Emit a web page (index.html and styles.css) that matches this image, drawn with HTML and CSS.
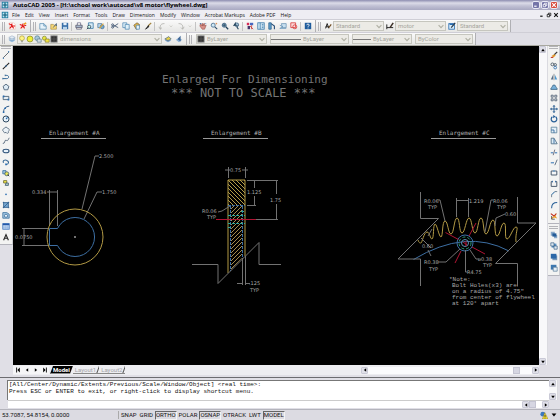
FILE: index.html
```html
<!DOCTYPE html>
<html lang="en">
<head>
    <meta charset="UTF-8">
    <meta name="viewport" content="width=device-width, initial-scale=1.0">
    <title>AutoCAD 2005 - [H:\school work\autocad\v8 motor\flywheel.dwg]</title>
    <link rel="stylesheet" href="styles.css">
</head>
<body>
    <!-- icon set, 10x10 each -->
    <svg class="defs" aria-hidden="true">
        <symbol id="app" viewBox="0 0 10 10"><rect x="1" y="1" width="8" height="8" fill="#12769a"/><path d="M2 2h6v6H2z" fill="#bfe6f2"/><path d="M5 2v6M2 5h6" stroke="#0a5878" stroke-width="1.4"/></symbol>
        <symbol id="pdf" viewBox="0 0 10 10"><path d="M2 1h5l2 2v6H2z" fill="#fff" stroke="#e8a8a0" stroke-width=".6"/><path d="M1 2l5 3 3 0M5 2c0 3-1 5-3 6M5 5l2 3" stroke="#e01818" stroke-width="1.3" fill="none"/></symbol>
        <symbol id="pdf2" viewBox="0 0 10 10"><path d="M1 3h6v6H2z" fill="#fbe8dc"/><path d="M1 3l5 2 3-1M5 2c0 3-1 5-3 6M5 5l2 3" stroke="#e01818" stroke-width="1.3" fill="none"/><path d="M6 3l3-2" stroke="#f0981c" stroke-width="2"/></symbol>
        <symbol id="new" viewBox="0 0 10 10"><path d="M1 2h5l3 3v4H1z" fill="#e6f3fa" stroke="#4480a8" stroke-width=".8"/><path d="M6 2v3h3" fill="none" stroke="#4480a8" stroke-width=".8"/></symbol>
        <symbol id="open" viewBox="0 0 10 10"><path d="M1 3h3l1 1h3v5H1z" fill="#f7d878" stroke="#98802c" stroke-width=".7"/><path d="M4 7l4-5M8 2v3" stroke="#3c5878" fill="none"/></symbol>
        <symbol id="save" viewBox="0 0 10 10"><rect x="1" y="1" width="8" height="8" fill="#376fa8"/><rect x="3" y="1" width="4" height="3" fill="#e4f0fa"/><rect x="2.500" y="6" width="5" height="3" fill="#b8d4ea"/></symbol>
        <symbol id="print" viewBox="0 0 10 10"><path d="M3 4V1h4v3" fill="#fff" stroke="#557" stroke-width=".8"/><path d="M1 4h8v3H1z" fill="#a8b8cc" stroke="#445" stroke-width=".8"/><path d="M2 7h6v2H2z" fill="#f0f0e0" stroke="#557" stroke-width=".8"/></symbol>
        <symbol id="preview" viewBox="0 0 10 10"><path d="M3 1h6v7H3z" fill="#d8ecf8" stroke="#3878a8"/><circle cx="4" cy="6" r="2" fill="#cfe" stroke="#345"/><path d="M2.500 7.500L1 9" stroke="#345" stroke-width="1.200"/></symbol>
        <symbol id="publish" viewBox="0 0 10 10"><path d="M1 2h5v5H1z" fill="#b8d8ee" stroke="#3a6890" stroke-width=".8"/><circle cx="6.500" cy="6" r="2.500" fill="#70a8d0" stroke="#305880" stroke-width=".7"/><path d="M3 8l5-6" stroke="#dba63c" stroke-width="1.400"/></symbol>
        <symbol id="cut" viewBox="0 0 10 10"><path d="M3 4l6 3M3 6l6-4" stroke="#334a68"/><circle cx="2" cy="3.500" r="1.200" fill="none" stroke="#334a68"/><circle cx="2" cy="6.500" r="1.200" fill="none" stroke="#334a68"/></symbol>
        <symbol id="copy" viewBox="0 0 10 10"><path d="M1 1h5v6H1z" fill="#dff0f8" stroke="#3878a8" stroke-width=".8"/><path d="M4 3h5v6H4z" fill="#dff0f8" stroke="#3878a8" stroke-width=".8"/></symbol>
        <symbol id="paste" viewBox="0 0 10 10"><path d="M1 4l4-3 3 2-1 5-3 1z" fill="#e8b848" stroke="#66542c" stroke-width=".8"/><path d="M4 4h4v5H4z" fill="#e8f4fa" stroke="#3878a8" stroke-width=".8"/></symbol>
        <symbol id="brush" viewBox="0 0 10 10"><path d="M9 1L5 5" stroke="#a08038" stroke-width="1.400"/><path d="M5.500 4.500L2 9l4-3z" fill="#222" stroke="#222"/></symbol>
        <symbol id="undo" viewBox="0 0 10 10"><path d="M3 9C2 4 4 2 8 2" fill="none" stroke="#b4b4b0" stroke-width="1.200"/><path d="M1 6l2 3 2-2" fill="none" stroke="#b4b4b0"/></symbol>
        <symbol id="redo" viewBox="0 0 10 10"><path d="M7 9C8 4 6 2 2 2" fill="none" stroke="#b4b4b0" stroke-width="1.200"/><path d="M9 6L7 9 5 7" fill="none" stroke="#b4b4b0"/></symbol>
        <symbol id="pan" viewBox="0 0 10 10"><path d="M2 2l2 3V2h1v3l1-3h1v3l2-1-2 5H4L1 5z" fill="#d89088" stroke="#8c3c34" stroke-width=".6"/><path d="M1 2h2M8 2h1" stroke="#2868a8"/></symbol>
        <symbol id="zoomrt" viewBox="0 0 10 10"><circle cx="4" cy="4" r="2.500" fill="#d0e8f4" stroke="#40688c"/><path d="M6 6l3 3" stroke="#30506c" stroke-width="1.400"/><path d="M7 2h2M8 1v2" stroke="#d07028" stroke-width=".7"/></symbol>
        <symbol id="zoomwin" viewBox="0 0 10 10"><circle cx="4" cy="4" r="2.500" fill="#90b8d0" stroke="#345878"/><path d="M6 6l3 3" stroke="#24445c" stroke-width="1.600"/><path d="M2 4h4M4 2v4" stroke="#24445c"/></symbol>
        <symbol id="zoomprev" viewBox="0 0 10 10"><circle cx="6" cy="3.500" r="2.300" fill="#b8d4e4" stroke="#345878"/><path d="M2 5l2-3v2h3M6 6l2 3" fill="none" stroke="#24445c" stroke-width="1.400"/></symbol>
        <symbol id="props" viewBox="0 0 10 10"><path d="M1 1h3v3H1z" fill="#d82c58"/><path d="M5 1h4v3H5z" fill="#4868c0"/><path d="M2 5h3v4H2z" fill="#48386c"/><path d="M5 5l4 4M7 4v5" stroke="#c83c38"/></symbol>
        <symbol id="center" viewBox="0 0 10 10"><rect x="1" y="1" width="8" height="8" fill="#d8ecf8" stroke="#3878a8"/><path d="M4 1v8M6 3h2M6 5h2M6 7h2" stroke="#3878a8"/></symbol>
        <symbol id="palettes" viewBox="0 0 10 10"><path d="M1 1h3v8H1z" fill="#60a0d0" stroke="#306890"/><path d="M4 2l4 3v4" fill="none" stroke="#285078" stroke-width="1.400"/></symbol>
        <symbol id="sheets" viewBox="0 0 10 10"><path d="M3 2h6v5H4z" fill="#c8e0f0" stroke="#5884a8" stroke-width=".8"/><path d="M1 4l4 2-4 2h8" fill="none" stroke="#6898bc"/></symbol>
        <symbol id="markup" viewBox="0 0 10 10"><path d="M1 1h6v6H1z" fill="#fbdcdc" stroke="#d83838"/><circle cx="6" cy="6" r="2.500" fill="none" stroke="#d83838"/></symbol>
        <symbol id="help" viewBox="0 0 10 10"><rect x="1" y="1" width="8" height="8" fill="#1f5c9c"/><path d="M3.500 4c0-2 3-2 3 0 0 1-1.500 1-1.500 2M5 7v1" stroke="#fff" fill="none" stroke-width="1.100"/></symbol>
        <symbol id="txtstyle" viewBox="0 0 10 10"><path d="M2 8l2-6 2 6M2 6h4" fill="none" stroke="#222" stroke-width="1.200"/><path d="M9 3L6 7" stroke="#704c20" stroke-width="1.500"/></symbol>
        <symbol id="dimstyle" viewBox="0 0 10 10"><path d="M1 3v6M1 7h8" stroke="#222" stroke-width="1.200"/><path d="M9 1L5 7" stroke="#3c3028" stroke-width="1.800"/></symbol>
        <symbol id="tblstyle" viewBox="0 0 10 10"><rect x="1" y="2" width="7" height="7" fill="#d8ecfa" stroke="#286cb0"/><path d="M2 3h5" stroke="#286cb0" stroke-width="1.500"/><path d="M9 1L4 7" stroke="#283848" stroke-width="1.500"/></symbol>
        <symbol id="layers" viewBox="0 0 10 10"><path d="M1 7l4-2 4 2-4 2z" fill="#90b8dc"/><path d="M1 5l4-2 4 2-4 2z" fill="#c4daec" stroke="#6488ac" stroke-width=".5"/><path d="M1 3l4-2 4 2-4 2z" fill="#e4ecf4" stroke="#7894b4" stroke-width=".5"/></symbol>
        <symbol id="bulb" viewBox="0 0 10 10"><circle cx="5" cy="4" r="3" fill="#fff488" stroke="#a89c30" stroke-width=".8"/><path d="M4 7h2v2H4z" fill="#98988c"/></symbol>
        <symbol id="sun" viewBox="0 0 10 10"><circle cx="5" cy="5" r="3.700" fill="#f0f038" stroke="#90902c"/></symbol>
        <symbol id="vpsun" viewBox="0 0 10 10"><circle cx="4" cy="4" r="3" fill="#a8c8d8" stroke="#60889c"/><path d="M4 5h5v4H4z" fill="#d4e0e4" stroke="#58748c" stroke-width=".8"/></symbol>
        <symbol id="lock" viewBox="0 0 10 10"><circle cx="3" cy="4" r="2.500" fill="#e8e840" stroke="#7c7c2c" stroke-width=".8"/><path d="M4 5h5v4H4z" fill="#f4e440" stroke="#78702c" stroke-width=".8"/></symbol>
        <symbol id="swatch" viewBox="0 0 10 10"><rect x="1" y="1" width="8" height="8" fill="#333" stroke="#999"/><path d="M5 1v8M1 5h8" stroke="#555"/></symbol>
        <symbol id="layprev" viewBox="0 0 10 10"><path d="M1 7l4-2 4 2-4 2z" fill="#7ca0c8"/><path d="M1 5l5-3 3 3-4 2z" fill="#e8d048" stroke="#385c84" stroke-width=".8"/></symbol>
        <symbol id="laystate" viewBox="0 0 10 10"><path d="M1 6l4-2 4 2-4 3z" fill="#88aed4"/><path d="M3 5l4-4v7z" fill="#406898"/></symbol>
        <symbol id="line" viewBox="0 0 10 10"><path d="M1.500 8.500l7-7" stroke="#404a54"/><path d="M1 9h1.500M7.500 1H9" stroke="#2468a8" stroke-width="1.400"/></symbol>
        <symbol id="xline" viewBox="0 0 10 10"><path d="M1 9l8-8" stroke="#222" stroke-width="1.300"/><circle cx="5" cy="5" r=".9" fill="#2468a8"/></symbol>
        <symbol id="pline" viewBox="0 0 10 10"><path d="M1 7h5c3 0 3-4 0-4H4" fill="none" stroke="#2f6494" stroke-width="1.200"/><path d="M1 6v2M4 2v2" stroke="#2f6494"/></symbol>
        <symbol id="polygon" viewBox="0 0 10 10"><path d="M5 1.500l3.600 2.700L7.200 8.500H2.800L1.400 4.200z" fill="#dceaf4" stroke="#3a5068"/></symbol>
        <symbol id="rect" viewBox="0 0 10 10"><path d="M1.500 3h7v4h-7z" fill="#e4eef6" stroke="#3c5468"/><path d="M1 2h2v2H1zM7 6h2v2H7z" fill="#286cb0"/></symbol>
        <symbol id="arc" viewBox="0 0 10 10"><path d="M2 9C2 4 5 2 9 1.500" fill="none" stroke="#2a5480" stroke-width="1.200"/><path d="M1 8h2v2H1zM3 3h2v2H3z" fill="#286cb0"/></symbol>
        <symbol id="circle" viewBox="0 0 10 10"><circle cx="5" cy="5" r="3.800" fill="#e8f2fa" stroke="#264058" stroke-width="1.200"/><path d="M5 5l2-2" stroke="#286cb0" stroke-width="1.400"/></symbol>
        <symbol id="revcloud" viewBox="0 0 10 10"><path d="M2 7C0 6 1 3 3 3c0-2 4-2 4 0 3 0 2 3 1 4 1 2-2 3-3 1-2 1-3 0-3-1z" fill="#eaf1f6" stroke="#506478"/></symbol>
        <symbol id="spline" viewBox="0 0 10 10"><path d="M1 8c3 1 2-5 4-4s2 1 4-3" fill="none" stroke="#40566c"/></symbol>
        <symbol id="ellipse" viewBox="0 0 10 10"><ellipse cx="5" cy="5" rx="3.800" ry="2.200" fill="#e8f2fa" stroke="#2c5078" stroke-width="1.300"/></symbol>
        <symbol id="ellarc" viewBox="0 0 10 10"><path d="M2 6C0 3 4 2 6 3c3 1 3 5-1 5" fill="none" stroke="#2c6090" stroke-width="1.300"/><path d="M4 7h2v2H4z" fill="#286cb0"/></symbol>
        <symbol id="insert" viewBox="0 0 10 10"><path d="M1 2h4v4H1z" fill="#a0c4e0" stroke="#3870a0"/><circle cx="6" cy="6" r="2.500" fill="#ece858" stroke="#3c5c70"/><path d="M7 7l2 2" stroke="#222"/></symbol>
        <symbol id="block" viewBox="0 0 10 10"><path d="M2 2h4v3H2z" fill="#f0e848" stroke="#6c6830"/><path d="M5 5h3v3H4z" fill="#b4d0c0" stroke="#405c74"/></symbol>
        <symbol id="point" viewBox="0 0 10 10"><circle cx="5" cy="5.500" r="1" fill="#286cb0"/></symbol>
        <symbol id="hatch" viewBox="0 0 10 10"><rect x="2" y="2" width="6" height="6" fill="#78a8d0"/><path d="M2 1v8M8 1v8M1 2h8M1 8h8M2 8l6-6" stroke="#2c5c8c"/></symbol>
        <symbol id="region" viewBox="0 0 10 10"><path d="M1 2h5l3 2v5H1z" fill="#a4c8e4" stroke="#3c709c"/><circle cx="5" cy="6" r="2" fill="#e8f2fa" stroke="#3c709c"/></symbol>
        <symbol id="table" viewBox="0 0 10 10"><rect x="1" y="2" width="8" height="7" fill="#c8dcf4" stroke="#3c74bc"/><path d="M1 3h8" stroke="#2458a8" stroke-width="2"/><path d="M4 4v5M6.500 4v5M1 6.500h8" stroke="#7ca4d8" stroke-width=".6"/></symbol>
        <symbol id="mtext" viewBox="0 0 10 10"><path d="M2 9l3-7 3 7M3 6.500h4" fill="none" stroke="#222" stroke-width="1.400"/></symbol>
        <symbol id="erase" viewBox="0 0 10 10"><path d="M9 1L5 5" stroke="#333" stroke-width="1.400"/><path d="M6 4L2 6l2 2 3-2z" fill="#e09828"/><path d="M1 8h3" stroke="#c03020" stroke-width="1.300"/></symbol>
        <symbol id="copyobj" viewBox="0 0 10 10"><circle cx="3" cy="3" r="1.800" fill="none" stroke="#3c4c5c"/><circle cx="6.500" cy="3.500" r="1.600" fill="none" stroke="#3c4c5c"/><circle cx="6.500" cy="7" r="1.700" fill="none" stroke="#286cb0"/></symbol>
        <symbol id="mirror" viewBox="0 0 10 10"><path d="M4 2v6H1z" fill="#587088"/><path d="M6 2v6h3z" fill="#4c98d0"/><path d="M5 1v8" stroke="#555" stroke-width=".6"/></symbol>
        <symbol id="offset" viewBox="0 0 10 10"><path d="M1 8c0-3 2-2 2-4s4-2 4 0 2 1 2 4z" fill="#78b0d8" stroke="#3c6484"/></symbol>
        <symbol id="array" viewBox="0 0 10 10"><path d="M1.500 1.500h2.500v2.500H1.500zM6 1.500h2.500v2.500H6zM1.500 6h2.500v2.500H1.500zM6 6h2.500v2.500H6z" fill="#eef4f8" stroke="#48586c"/></symbol>
        <symbol id="move" viewBox="0 0 10 10"><path d="M5 1v8M1 5h8" stroke="#285c90" stroke-width="1.200"/><path d="M5 0l2 2H3zM5 10l2-2H3zM0 5l2-2v4zM10 5L8 3v4z" fill="#285c90"/></symbol>
        <symbol id="rotate" viewBox="0 0 10 10"><path d="M3 2.300a3.500 3.500 0 1 0 4 0" fill="none" stroke="#286098" stroke-width="1.500"/><path d="M4 0v4l3-2z" fill="#286098"/></symbol>
        <symbol id="scale" viewBox="0 0 10 10"><path d="M1.500 1.500h7v7h-7z" fill="#e4f0f8" stroke="#58809c"/><path d="M1.500 5H5v3.500" fill="none" stroke="#286098"/></symbol>
        <symbol id="stretch" viewBox="0 0 10 10"><path d="M1.500 1.500H5l4 7H1.500z" fill="#dcecf6" stroke="#486880"/><path d="M5 2v6" stroke="#286098"/></symbol>
        <symbol id="trim" viewBox="0 0 10 10"><path d="M1 6h3M6 6h3" stroke="#286cb0" stroke-width="1.200"/><path d="M6 2L4 9" stroke="#556"/></symbol>
        <symbol id="extend" viewBox="0 0 10 10"><path d="M1 6h4" stroke="#286cb0" stroke-width="1.200"/><path d="M9 2L6 9" stroke="#40566c"/></symbol>
        <symbol id="breakpt" viewBox="0 0 10 10"><path d="M1.500 2.500h7v5h-7z" fill="#f4f6f8" stroke="#48586c" stroke-width="1.200"/><path d="M4 2.500h2" stroke="#4c98d8" stroke-width="1.200"/></symbol>
        <symbol id="break" viewBox="0 0 10 10"><path d="M3.500 2h-2v6h7V2h-2" fill="none" stroke="#48586c" stroke-width="1.200"/><path d="M3 1v2M7 1v2" stroke="#286cb0"/></symbol>
        <symbol id="chamfer" viewBox="0 0 10 10"><path d="M2 9V6l4-4h3" fill="none" stroke="#566878"/><path d="M2 6l4-4" stroke="#3c88c8"/></symbol>
        <symbol id="fillet" viewBox="0 0 10 10"><path d="M2 9c0-5 2-7 7-7" fill="none" stroke="#286098" stroke-width="1.300"/></symbol>
        <symbol id="explode" viewBox="0 0 10 10"><path d="M2 7l3-2 3-4-1 4 2 3-4-1-3 2z" fill="#e8a030"/><path d="M1 2l4 3M5 5l3-3" stroke="#c02c20" stroke-width="1.300"/><path d="M2 5v4h4" stroke="#444" fill="none"/></symbol>
        <symbol id="front" viewBox="0 0 10 10"><path d="M1 1h5v5H1zM5 5h4v4H5z" fill="#88a8c8"/><path d="M3 3h5v4H3z" fill="#245c98"/></symbol>
        <symbol id="back" viewBox="0 0 10 10"><path d="M2 2h6v5H2z" fill="#5c94c8"/><path d="M1 1h4v4H1zM5 5h4v4H5z" fill="#dce8f2" stroke="#34587c" stroke-width=".8"/></symbol>
        <symbol id="above" viewBox="0 0 10 10"><path d="M3 3h6v6H3z" fill="#7898b8"/><path d="M1 1h7v6H1z" fill="#2c68a8"/></symbol>
        <symbol id="under" viewBox="0 0 10 10"><path d="M1 1h7v6H1z" fill="#3c78b0"/><path d="M4 4h5v5H4z" fill="#e4eef6" stroke="#4c7090" stroke-width=".8"/></symbol>
        <symbol id="up" viewBox="0 0 10 10"><path d="M5 3l3 4H2z"/></symbol>
        <symbol id="down" viewBox="0 0 10 10"><path d="M5 7l3-4H2z"/></symbol>
        <symbol id="left" viewBox="0 0 10 10"><path d="M3 5l4-3v6z"/></symbol>
        <symbol id="right" viewBox="0 0 10 10"><path d="M7 5L3 2v6z"/></symbol>
        <symbol id="first" viewBox="0 0 10 10"><path d="M4 5l4-4v8zM2 1h1.500v8H2z"/></symbol>
        <symbol id="last" viewBox="0 0 10 10"><path d="M6 5L2 1v8zM6.500 1H8v8H6.500z"/></symbol>
        <symbol id="chev" viewBox="0 0 10 10"><path d="M2 4l3 3 3-3" fill="none" stroke="#b0b0a4" stroke-width="1.500"/></symbol>
        <symbol id="min" viewBox="0 0 10 10"><path d="M2 7h4" stroke="currentColor" stroke-width="2"/></symbol>
        <symbol id="restore" viewBox="0 0 10 10"><path d="M4 4V2h4v4H6M2 4h4v4H2z" fill="none" stroke="currentColor" stroke-width="1.300"/></symbol>
        <symbol id="close" viewBox="0 0 10 10"><path d="M2 2l6 6M8 2L2 8" stroke="currentColor" stroke-width="1.800"/></symbol>
        <symbol id="comm" viewBox="0 0 10 10"><circle cx="3.500" cy="4" r="3" fill="#3c78c0"/><path d="M6 2l4 8H3z" fill="#f8e030" stroke="#706018" stroke-width=".5"/><path d="M6.300 5v2.500M6.300 8.200v1" stroke="#222"/></symbol>
    </svg>

    <div class="window">
        <header class="titlebar">
            <svg class="icon"><use href="#app"/></svg>
            <h1>AutoCAD 2005 - [H:\school work\autocad\v8 motor\flywheel.dwg]</h1>
            <div class="winbtns">
                <button aria-label="Minimize"><svg><use href="#min"/></svg></button>
                <button aria-label="Restore"><svg><use href="#restore"/></svg></button>
                <button class="x" aria-label="Close"><svg><use href="#close"/></svg></button>
            </div>
        </header>

        <nav class="menubar">
            <svg class="icon"><use href="#app"/></svg>
            <button>File</button>
            <button>Edit</button>
            <button>View</button>
            <button>Insert</button>
            <button>Format</button>
            <button>Tools</button>
            <button>Draw</button>
            <button>Dimension</button>
            <button>Modify</button>
            <button>Window</button>
            <button>Acrobat Markups</button>
            <button>Adobe PDF</button>
            <button>Help</button>
            <div class="docbtns">
                <button aria-label="Minimize drawing"><svg><use href="#min"/></svg></button>
                <button aria-label="Restore drawing"><svg><use href="#restore"/></svg></button>
                <button aria-label="Close drawing"><svg><use href="#close"/></svg></button>
            </div>
        </nav>

        <div class="toolrow">
            <div class="toolbar">
                <i class="grip"></i>
                <button aria-label="Convert to PDF"><svg><use href="#pdf"/></svg></button>
                <button aria-label="Convert and email"><svg><use href="#pdf2"/></svg></button>
            </div>
            <div class="toolbar">
                <i class="grip"></i>
                <button aria-label="New"><svg><use href="#new"/></svg></button>
                <button aria-label="Open"><svg><use href="#open"/></svg></button>
                <button aria-label="Save"><svg><use href="#save"/></svg></button>
                <i class="sep"></i>
                <button aria-label="Plot"><svg><use href="#print"/></svg></button>
                <button aria-label="Plot preview"><svg><use href="#preview"/></svg></button>
                <button aria-label="Publish"><svg><use href="#publish"/></svg></button>
                <i class="sep"></i>
                <button aria-label="Cut"><svg><use href="#cut"/></svg></button>
                <button aria-label="Copy"><svg><use href="#copy"/></svg></button>
                <button aria-label="Paste"><svg><use href="#paste"/></svg></button>
                <button aria-label="Match properties"><svg><use href="#brush"/></svg></button>
                <i class="sep"></i>
                <button aria-label="Undo"><svg><use href="#undo"/></svg></button>
                <button class="drop" aria-label="Undo list"><svg><use href="#chev"/></svg></button>
                <button aria-label="Redo"><svg><use href="#redo"/></svg></button>
                <button class="drop" aria-label="Redo list"><svg><use href="#chev"/></svg></button>
                <i class="sep"></i>
                <button aria-label="Pan"><svg><use href="#pan"/></svg></button>
                <button aria-label="Zoom realtime"><svg><use href="#zoomrt"/></svg></button>
                <button aria-label="Zoom window"><svg><use href="#zoomwin"/></svg></button>
                <button aria-label="Zoom previous"><svg><use href="#zoomprev"/></svg></button>
                <i class="sep"></i>
                <button aria-label="Properties"><svg><use href="#props"/></svg></button>
                <button aria-label="DesignCenter"><svg><use href="#center"/></svg></button>
                <button aria-label="Tool palettes"><svg><use href="#palettes"/></svg></button>
                <button aria-label="Sheet set manager"><svg><use href="#sheets"/></svg></button>
                <button aria-label="Markup set manager"><svg><use href="#markup"/></svg></button>
                <i class="sep"></i>
                <button aria-label="Help topics"><svg><use href="#help"/></svg></button>
            </div>
            <div class="toolbar">
                <i class="grip"></i>
                <button aria-label="Text style"><svg><use href="#txtstyle"/></svg></button>
                <div class="combo style"><select aria-label="Text style"><option>Standard</option></select><svg><use href="#chev"/></svg></div>
                <button aria-label="Dimension style"><svg><use href="#dimstyle"/></svg></button>
                <div class="combo style"><select aria-label="Dimension style"><option>motor</option></select><svg><use href="#chev"/></svg></div>
                <button aria-label="Table style"><svg><use href="#tblstyle"/></svg></button>
                <div class="combo style"><select aria-label="Table style"><option>Standard</option></select><svg><use href="#chev"/></svg></div>
            </div>
        </div>

        <div class="toolrow">
            <div class="toolbar">
                <i class="grip"></i>
                <button aria-label="Layer manager"><svg><use href="#layers"/></svg></button>
                <div class="combo layer">
                    <svg><use href="#bulb"/></svg><svg><use href="#sun"/></svg><svg><use href="#vpsun"/></svg><svg><use href="#lock"/></svg><svg><use href="#swatch"/></svg>
                    <select aria-label="Layer"><option>dimensions</option></select><svg><use href="#chev"/></svg>
                </div>
                <button aria-label="Make object's layer current"><svg><use href="#layprev"/></svg></button>
                <button aria-label="Layer previous"><svg><use href="#laystate"/></svg></button>
            </div>
            <div class="toolbar props">
                <i class="grip"></i>
                <div class="combo color"><svg><use href="#swatch"/></svg><select aria-label="Color"><option>ByLayer</option></select><svg><use href="#chev"/></svg></div>
                <div class="combo ltype"><i class="rule"></i><select aria-label="Linetype"><option>ByLayer</option></select><svg><use href="#chev"/></svg></div>
                <div class="combo lweight"><i class="rule"></i><select aria-label="Lineweight"><option>ByLayer</option></select><svg><use href="#chev"/></svg></div>
                <div class="combo pstyle"><select aria-label="Plot style"><option>ByColor</option></select><svg><use href="#chev"/></svg></div>
            </div>
        </div>

        <main class="workspace">
            <aside class="side">
                <div class="palette">
                    <i class="hgrip"></i>
                    <div class="tools draw">
                        <button aria-label="Line"><svg><use href="#line"/></svg></button>
                        <button aria-label="Construction line"><svg><use href="#xline"/></svg></button>
                        <button aria-label="Polyline"><svg><use href="#pline"/></svg></button>
                        <button aria-label="Polygon"><svg><use href="#polygon"/></svg></button>
                        <button aria-label="Rectangle"><svg><use href="#rect"/></svg></button>
                        <button aria-label="Arc"><svg><use href="#arc"/></svg></button>
                        <button aria-label="Circle"><svg><use href="#circle"/></svg></button>
                        <button aria-label="Revision cloud"><svg><use href="#revcloud"/></svg></button>
                        <button aria-label="Spline"><svg><use href="#spline"/></svg></button>
                        <button aria-label="Ellipse"><svg><use href="#ellipse"/></svg></button>
                        <button aria-label="Ellipse arc"><svg><use href="#ellarc"/></svg></button>
                        <button aria-label="Insert block"><svg><use href="#insert"/></svg></button>
                        <button aria-label="Make block"><svg><use href="#block"/></svg></button>
                        <button aria-label="Point"><svg><use href="#point"/></svg></button>
                        <button aria-label="Hatch"><svg><use href="#hatch"/></svg></button>
                        <button aria-label="Region"><svg><use href="#region"/></svg></button>
                        <button aria-label="Table"><svg><use href="#table"/></svg></button>
                        <button aria-label="Multiline text"><svg><use href="#mtext"/></svg></button>
                    </div>
                </div>
            </aside>

            <div class="viewport">
                <svg class="drawing" viewBox="13 46 526 320" preserveAspectRatio="xMinYMin meet">
                    <defs>
                        <pattern id="hatchA" width="4" height="4" patternUnits="userSpaceOnUse"><path d="M-1 -1l6 6M-1 3l2 2M3 -1l2 2" stroke="#b49c48"/></pattern>
                        <pattern id="hatchB" width="4" height="4" patternUnits="userSpaceOnUse"><path d="M-1 5l6-6M-1 1l2-2M3 5l2-2" stroke="#a48c50" stroke-width=".9"/></pattern>
                    </defs>

                    <text class="big" x="162" y="83">Enlarged For Dimensioning</text>
                    <text class="big wide" x="171" y="97">*** NOT TO SCALE ***</text>

                    <!-- Enlargement A: bore and keyway -->
                    <text class="head" x="49" y="135">Enlargement #A</text>
                    <g class="dim">
                        <path class="under" d="M41 138.500h65"/>
                        <path d="M82 209l13-53h4M84 219l13-27h5M49.500 190v36M57.500 190v36M47 192h11M22 228.500h26M22 245.500h26M24 228v17"/>
                        <text x="99" y="158">2.500</text>
                        <text x="102" y="194">1.750</text>
                        <text x="32" y="194">0.334</text>
                        <text x="15" y="239">0.0750</text>
                    </g>
                    <circle class="yellow" cx="75" cy="237" r="28"/>
                    <path class="blue" d="M57.500 228.500h-8v17h8a19.500 19.500 0 1 0 0-17z"/>
                    <circle cx="75" cy="237" r="1" fill="#999"/>

                    <!-- Enlargement B: section -->
                    <text class="head" x="211" y="135">Enlargement #B</text>
                    <rect x="228" y="180" width="17" height="25" fill="url(#hatchA)"/>
                    <path d="M231 206h11v52l-11 12z" fill="url(#hatchB)"/>
                    <path class="yellow" d="M228 273v-93h17v76"/>
                    <path class="blue dash" d="M228 205.500h17M230.500 206v65M242.500 206v52"/>
                    <path class="cyan dash" d="M228 215.500h17M228 223.500h17M228 227.500h4M241 211.500h4"/>
                    <path class="red" d="M216 219.500h40"/>
                    <g class="dim">
                        <path class="under" d="M203 138.500h65"/>
                        <path d="M192 264.500h26v19l41-41v22h22M228.500 167v11M245.500 167v11M225 170h5M242 170h6M247 180.500h31M247 205.500h9M254.500 181v7M254.500 196v9M276.500 181v13M276.500 204v15M256 219.500h22M218 212l4-1 8-5M242.500 258v27M245.500 256v29M237 283.500h5M246 283.500h4"/>
                        <text x="230" y="172">0.75</text>
                        <text x="247" y="194">1.125</text>
                        <text x="270" y="202">1.75</text>
                        <text x="202" y="213">R0.06</text>
                        <text x="207" y="219">TYP</text>
                        <text x="249" y="285">.125</text>
                        <text x="250" y="292">TYP</text>
                    </g>

                    <!-- Enlargement C: ring gear teeth and bolt hole -->
                    <text class="head" x="439" y="135">Enlargement #C</text>
                    <path class="blue" d="M413.500 259.500Q466 228 509 251"/>
                    <path class="yellow" d="M418 240C419 243 420 243 421 243S424 232 427 232 430 239 432 239 433 224 435 224 439 237 441 237 442 221 445 221 448 234 451 234 454 218 457 218 459 233 462 233 466 218 469 218 472 233 475 233 478 218 481 218 483 234 486 234 490 220 493 220 494 236 497 236 501 223 504 223 504 239 507 239 513 227 516 227 515 233 516 242"/>
                    <circle class="blue" cx="465" cy="243" r="8"/>
                    <circle class="green" cx="465" cy="243" r="6"/>
                    <circle class="dimc" cx="465" cy="243" r="3.500"/>
                    <path class="red" d="M445.500 232.500l13 7M476 223l-7 13M472 247l13 7M461 251l-6 12M463 242l4 3M466 241v5"/>
                    <g class="dim">
                        <path class="under" d="M431 138.500h65"/>
                        <path d="M420.500 192v26.500h18l-40.500 40.500h22.500v27M517.500 197v26h18.500l-40.500 40.500h22v23M438 200h2l5 21M493 200h-2l-6 32M456.500 198v19M468.500 198v19M457 200.500h12M505 214l-9 4-1 8M438 262h8l14-13M479 259h-3l-6-9M465.500 250v22h2M428 236l4-7M428 250l3 6M421 238l10 10"/>
                        <text x="424" y="203">R0.06</text>
                        <text x="428" y="209">TYP</text>
                        <text x="469" y="203">1.219</text>
                        <text x="493" y="203">R0.06</text>
                        <text x="497" y="209">TYP</text>
                        <text x="505" y="216">0.60</text>
                        <text x="422" y="248">0.60</text>
                        <text x="424" y="264">R0.38</text>
                        <text x="429" y="271">TYP</text>
                        <text x="478" y="261">⌀0.38</text>
                        <text x="483" y="267">TYP</text>
                        <text x="467" y="274">R4.75</text>
                    </g>
                    <g class="note">
                        <text x="449" y="281">*Note:</text>
                        <text x="452" y="287">Bolt Holes(x3) are</text>
                        <text x="452" y="293">on a radius of 4.75"</text>
                        <text x="452" y="299">from center of flywheel</text>
                        <text x="452" y="305">at 120° apart</text>
                    </g>
                </svg>
            </div>

            <div class="vscroll">
                <button aria-label="Scroll up"><svg><use href="#up"/></svg></button>
                <button aria-label="Scroll down"><svg><use href="#down"/></svg></button>
            </div>

            <aside class="side">
                <div class="palette">
                    <i class="hgrip"></i>
                    <div class="tools modify">
                        <button aria-label="Erase"><svg><use href="#erase"/></svg></button>
                        <button aria-label="Copy object"><svg><use href="#copyobj"/></svg></button>
                        <button aria-label="Mirror"><svg><use href="#mirror"/></svg></button>
                        <button aria-label="Offset"><svg><use href="#offset"/></svg></button>
                        <button aria-label="Array"><svg><use href="#array"/></svg></button>
                        <button aria-label="Move"><svg><use href="#move"/></svg></button>
                        <button aria-label="Rotate"><svg><use href="#rotate"/></svg></button>
                        <button aria-label="Scale"><svg><use href="#scale"/></svg></button>
                        <button aria-label="Stretch"><svg><use href="#stretch"/></svg></button>
                        <button aria-label="Trim"><svg><use href="#trim"/></svg></button>
                        <button aria-label="Extend"><svg><use href="#extend"/></svg></button>
                        <button aria-label="Break at point"><svg><use href="#breakpt"/></svg></button>
                        <button aria-label="Break"><svg><use href="#break"/></svg></button>
                        <button aria-label="Chamfer"><svg><use href="#chamfer"/></svg></button>
                        <button aria-label="Fillet"><svg><use href="#fillet"/></svg></button>
                        <button aria-label="Explode"><svg><use href="#explode"/></svg></button>
                    </div>
                </div>
                <div class="palette">
                    <i class="hgrip"></i>
                    <div class="tools order">
                        <button aria-label="Bring to front"><svg><use href="#front"/></svg></button>
                        <button aria-label="Send to back"><svg><use href="#back"/></svg></button>
                        <button aria-label="Bring above object"><svg><use href="#above"/></svg></button>
                        <button aria-label="Send under object"><svg><use href="#under"/></svg></button>
                    </div>
                </div>
            </aside>
        </main>

        <div class="tabs">
            <div class="tabnav">
                <button aria-label="First tab"><svg><use href="#first"/></svg></button>
                <button aria-label="Previous tab"><svg><use href="#left"/></svg></button>
                <button aria-label="Next tab"><svg><use href="#right"/></svg></button>
                <button aria-label="Last tab"><svg><use href="#last"/></svg></button>
            </div>
            <button class="tab active">Model</button>
            <button class="tab">Layout1</button>
            <button class="tab">Layout2</button>
            <div class="hscroll">
                <button aria-label="Scroll left"><svg><use href="#left"/></svg></button>
                <i class="thumb"></i>
                <button aria-label="Scroll right"><svg><use href="#right"/></svg></button>
            </div>
        </div>

        <section class="command">
            <div class="log">
                <p>[All/Center/Dynamic/Extents/Previous/Scale/Window/Object] &lt;real time&gt;:</p>
                <p>Press ESC or ENTER to exit, or right-click to display shortcut menu.</p>
                <input type="text" aria-label="Command">
            </div>
            <div class="vscroll">
                <button aria-label="History up"><svg><use href="#up"/></svg></button>
                <button aria-label="History down"><svg><use href="#down"/></svg></button>
            </div>
            <div class="hscroll">
                <button aria-label="History left"><svg><use href="#left"/></svg></button>
                <i class="thumb"></i>
                <button aria-label="History right"><svg><use href="#right"/></svg></button>
            </div>
        </section>

        <footer class="status">
            <span class="coords">53.7087, 54.8154, 0.0000</span>
            <button>SNAP</button>
            <button>GRID</button>
            <button class="on">ORTHO</button>
            <button>POLAR</button>
            <button class="on">OSNAP</button>
            <button>OTRACK</button>
            <button>LWT</button>
            <button class="on">MODEL</button>
            <div class="tray">
                <svg><use href="#comm"/></svg>
                <svg><use href="#down"/></svg>
            </div>
        </footer>
    </div>
</body>
</html>
```
FILE: styles.css
```css
* {
    box-sizing: border-box;
}
body {
    margin: 0;
    background: #e0dfe6;
    font-family: Roboto, "Liberation Sans", sans-serif;
    font-size: 6px;
    line-height: 8px;
    color: #111;
}
.defs {
    display: none;
}
.window {
    display: flex;
    flex-direction: column;
    height: 100vh;
    overflow: hidden;
}
button {
    margin: 0;
    padding: 0;
    border: 0;
    background: none;
    font: inherit;
    color: inherit;
    display: flex;
    align-items: center;
    justify-content: center;
    flex: none;
}
svg {
    width: 8px;
    height: 8px;
    flex: none;
}

/* title + menu */
.titlebar {
    display: flex;
    align-items: center;
    height: 10px;
    padding-left: 1px;
    background: linear-gradient(#8d8db0, #dcdce8 30%, #c0c0d4 60%, #a9a9c2);
}
.titlebar h1 {
    margin: 0 0 0 4px;
    font-family: "Open Sans", sans-serif;
    font-size: 6px;
    line-height: 10px;
    font-weight: bold;
    white-space: nowrap;
    color: #000;
}
.winbtns {
    display: flex;
    gap: 1px;
    margin-left: auto;
    padding-right: 2px;
}
.winbtns button {
    width: 8px;
    height: 8px;
    border: 1px solid #e8e8f4;
    border-radius: 2px;
    background: #7474a8;
    color: #fff;
}
.winbtns .x {
    background: #d8483c;
}
.winbtns svg {
    width: 6px;
    height: 6px;
}
.menubar {
    display: flex;
    align-items: center;
    gap: 5px;
    height: 9px;
    padding-left: 1px;
    background: #eeedf3;
    font-family: "Open Sans", sans-serif;
    font-size: 5px;
}
.menubar .icon {
    width: 8px;
    height: 8px;
    margin-right: -2px;
}
.docbtns {
    display: flex;
    gap: 1px;
    margin-left: auto;
    padding-right: 1px;
}
.docbtns svg {
    width: 6px;
    height: 6px;
}

/* horizontal toolbars */
.toolrow {
    display: flex;
    height: 13px;
    border-top: 1px solid #cfced6;
}
.toolbar {
    display: flex;
    align-items: center;
    background: linear-gradient(#fafafa, #e6e6e4);
    border-right: 1px solid #b0b0b4;
    padding-right: 2px;
}
.toolbar button {
    width: 11px;
    height: 11px;
}
.toolbar .drop {
    width: 8px;
}
.toolbar .drop svg {
    width: 4px;
    height: 4px;
}
.grip {
    width: 3px;
    height: 9px;
    margin: 0 1px 0 2px;
    border-left: 1px solid #b4b4b8;
    border-right: 1px solid #b4b4b8;
}
.sep {
    width: 1px;
    height: 9px;
    margin: 0 1px;
    background: #c4c4c4;
}
.combo {
    display: flex;
    align-items: center;
    height: 10px;
    border: 1px solid #c6c6be;
    background: #ecebe6;
}
.combo svg {
    width: 8px;
    height: 8px;
}
.combo select {
    appearance: none;
    flex: 1;
    min-width: 0;
    height: 8px;
    padding: 0 2px;
    border: 0;
    background: none;
    font: inherit;
    color: #a4a49c;
}
.style {
    width: 51px;
}
.layer {
    width: 145px;
}
.props {
    gap: 3px;
}
.color {
    width: 71px;
}
.ltype {
    width: 79px;
}
.lweight {
    width: 60px;
}
.pstyle {
    width: 58px;
}
.rule {
    width: 30px;
    height: 1px;
    background: #777;
}
.lweight .rule {
    width: 18px;
}

/* drawing area */
.workspace {
    display: flex;
    flex: 1;
    min-height: 0;
    border-top: 1px solid #a8a8a0;
}
.side {
    width: 12px;
    flex: none;
}
.side:first-child {
    width: 13px;
}
.palette {
    padding-bottom: 2px;
    background: #f3f3f2;
    border-right: 1px solid #cdcdd2;
    border-bottom: 1px solid #b4b4bc;
}
.hgrip {
    display: block;
    height: 3px;
    margin: 0 1px 1px;
    border-top: 1px solid #b4b4b8;
    border-bottom: 1px solid #b4b4b8;
}
.palette + .palette {
    padding-top: 2px;
}
.tools {
    display: grid;
    grid-auto-rows: 1fr;
}
.draw {
    height: 192px;
}
.modify {
    height: 171px;
}
.order {
    height: 43px;
}
.viewport {
    flex: 1;
    min-width: 0;
    overflow: hidden;
    background: #000;
}
.drawing {
    display: block;
    width: 100%;
    height: auto;
}
.drawing text {
    fill: #a8a8a8;
    font-family: "DejaVu Sans", sans-serif;
    font-size: 5px;
}
.drawing .big {
    font-family: "DejaVu Sans Mono", monospace;
    font-size: 11px;
    fill: #747474;
}
.drawing .wide {
    font-size: 12px;
}
.drawing .head {
    font-family: "DejaVu Sans Mono", monospace;
    font-size: 6px;
    fill: #b0b0b0;
}
.drawing .note text {
    font-family: "Liberation Mono", monospace;
    font-size: 6px;
}
.drawing path,
.drawing circle {
    stroke-width: 1;
}
.dim path {
    fill: none;
    stroke: #727272;
}
.dim .under {
    stroke: #999;
}
.yellow {
    fill: none;
    stroke: #b39a45;
}
.blue {
    fill: none;
    stroke: #3d6fa3;
}
.cyan {
    fill: none;
    stroke: #2aa79b;
}
.green {
    fill: none;
    stroke: #2f9a78;
    stroke-dasharray: 3 2;
}
.dimc {
    fill: none;
    stroke: #5f8fb0;
}
.red {
    fill: none;
    stroke: #b01433;
}
.dash {
    stroke-dasharray: 3 1;
}

/* scroll bars */
.vscroll {
    display: flex;
    flex-direction: column;
    justify-content: space-between;
    width: 9px;
    flex: none;
    background: #f8f8fa;
    border-right: 1px solid #dadae0;
}
.vscroll button,
.hscroll button {
    width: 7px;
    height: 7px;
    background: #dfdfe8;
    border: 1px solid #c9c9d6;
    border-radius: 1px;
}
.vscroll svg,
.hscroll svg {
    width: 6px;
    height: 6px;
}
.hscroll {
    display: flex;
    align-items: center;
    background: #fbfbfd;
}
.thumb {
    width: 7px;
    height: 7px;
    background: #d6d6e2;
    border: 1px solid #c4c4d2;
}

/* layout tabs */
.tabs {
    display: flex;
    align-items: center;
    height: 10px;
    margin: 0 21px 0 13px;
    background: #ededf1;
}
.tabnav {
    display: flex;
    margin-right: 1px;
}
.tabnav button {
    width: 9px;
    height: 8px;
    background: #f5f5f7;
}
.tabnav svg {
    width: 6px;
    height: 6px;
}
.tab {
    height: 8px;
    padding: 0 3px 0 2px;
    border-bottom: 1px solid #888;
    background: linear-gradient(110deg, transparent calc(100% - 3px), #555 calc(100% - 2px), transparent calc(100% - 1px));
    color: #a4a4a8;
}
.tab.active {
    padding: 0 3px;
    background: #000;
    color: #fff;
    font-weight: bold;
    clip-path: polygon(3px 0, 100% 0, calc(100% - 3px) 100%, 0 100%);
}
.tabs .hscroll {
    width: 178px;
    margin-left: auto;
}
.tabs .thumb {
    margin: 0 12px 0 auto;
}

/* command line */
.command {
    display: grid;
    grid-template-columns: 1fr 9px;
    grid-template-rows: 20px 8px;
    margin-top: 2px;
    padding: 2px 2px 1px 7px;
    border-top: 1px solid #6c6c70;
}
.log {
    padding: 0 1px;
    border-top: 1px solid #777;
    border-left: 1px solid #777;
    background: #fff;
    font-family: "Liberation Mono", monospace;
    line-height: 7px;
    overflow: hidden;
}
.log p {
    margin: 0;
    white-space: pre;
}
.log input {
    display: block;
    width: 100%;
    height: 5px;
    padding: 0;
    border: 0;
    outline: 0;
    background: none;
    font: inherit;
}
.command .hscroll {
    margin-left: 1px;
    border-top: 1px solid #ccc;
    background: #fff;
    justify-content: flex-end;
}
.command .hscroll .thumb {
    margin-right: 6px;
}

/* status bar */
.status {
    display: flex;
    align-items: center;
    gap: 1px;
    height: 11px;
    padding: 0 2px;
    border-top: 1px solid #b4b4bc;
    background: #dcdbe2;
}
.coords {
    width: 117px;
    border-right: 1px solid #aaa;
}
.status button {
    height: 9px;
    border: 1px solid transparent;
}
.status .on {
    border-color: #666 #f4f4f4 #f4f4f4 #666;
}
.tray {
    display: flex;
    gap: 2px;
    margin-left: auto;
}
```
